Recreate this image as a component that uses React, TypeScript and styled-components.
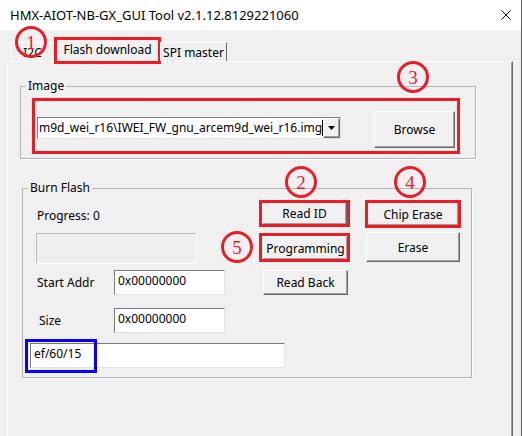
import React from 'react';
import styled, { createGlobalStyle } from 'styled-components';

const RED = '#ed1c24';
const UI_FONT = `"Noto Sans", "Open Sans", "Liberation Sans", sans-serif`;

const GlobalStyle = createGlobalStyle`
  html, body { margin: 0; padding: 0; background: #ffffff; }
  body { font-family: ${UI_FONT}; font-size: 12px; color: #000; }
  * { box-sizing: border-box; }
`;

const Window = styled.div`
  position: relative;
  width: 522px;
  height: 436px;
  border-right: 1px solid #5f5f5f;
  display: flex;
  flex-direction: column;
  overflow: hidden;
  background: #f0f0f0;
`;

const TitleBar = styled.div`
  height: 30px;
  flex: none;
  background: #ffffff;
  display: flex;
  align-items: center;
  justify-content: space-between;
  padding: 0 10px 0 10px;
`;

const Title = styled.span`
  font-size: 13px;
  color: #000;
  white-space: nowrap;
`;

const CloseIcon = styled.svg`
  width: 10px;
  height: 10px;
  display: block;
`;

const Client = styled.div`
  flex: 1;
  display: flex;
  flex-direction: column;
  padding: 8px 0 0 7px;
  width: 514px;
`;

const TabStrip = styled.div`
  position: relative;
  z-index: 1;
  display: flex;
  align-items: flex-end;
  height: 24px;
  padding-left: 3px;
`;

const Tab = styled.div<{ $w: number; $active?: boolean }>`
  position: relative;
  width: ${(p) => p.$w}px;
  height: ${(p) => (p.$active ? 24 : 19)}px;
  margin-bottom: ${(p) => (p.$active ? 0 : 1)}px;
  display: flex;
  align-items: center;
  justify-content: center;
  padding-bottom: ${(p) => (p.$active ? 2 : 0)}px;
  background: #f0f0f0;
  border-top: 1px solid #ffffff;
  border-left: 1px solid #ffffff;
  border-right: 1px solid ${(p) => (p.$active ? '#a0a0a0' : '#696969')};
  white-space: nowrap;
  font-size: 12px;
`;

const Panel = styled.div`
  position: relative;
  z-index: 0;
  flex: 1;
  margin-top: -1px;
  width: 506px;
  border-top: 1px solid #ffffff;
  border-left: 1px solid #ffffff;
  border-right: 1px solid #696969;
  box-shadow: inset -1px 0 0 #a0a0a0;
  padding: 24px 0 0 12px;
  display: flex;
  flex-direction: column;
`;

const GroupBox = styled.div<{ $w: number; $h: number; $mt?: number; $ml?: number }>`
  position: relative;
  flex: none;
  width: ${(p) => p.$w}px;
  height: ${(p) => p.$h}px;
  margin-top: ${(p) => p.$mt ?? 0}px;
  margin-left: ${(p) => p.$ml ?? 0}px;
  border: 1px solid #b4b4b4;
  box-shadow: 1px 1px 0 #ffffff;
`;

const Legend = styled.span`
  position: absolute;
  top: -9px;
  left: 5px;
  padding: 0 2px;
  line-height: 16px;
  background: #f0f0f0;
  font-size: 12px;
  white-space: nowrap;
`;

const ImageRow = styled.div`
  display: flex;
  align-items: flex-start;
  margin: 11px 0 0 11px;
  width: 428px;
  height: 56px;
  border: 3px solid ${RED};
`;

const Combo = styled.div`
  display: flex;
  margin: 16px 0 0 2px;
  width: 304px;
  height: 22px;
  background: #ffffff;
  border-style: solid;
  border-width: 1px;
  border-color: #828282 #e3e3e3 #e3e3e3 #828282;
`;

const ComboText = styled.div`
  flex: 1;
  overflow: hidden;
  white-space: nowrap;
  padding: 1px 0 0 1px;
  line-height: 18px;
  font-size: 12px;
  position: relative;
`;

const Caret = styled.span`
  position: absolute;
  right: 0;
  top: 2px;
  width: 1px;
  height: 16px;
  background: #000;
`;

const DropButton = styled.div`
  flex: none;
  width: 17px;
  height: 20px;
  display: flex;
  align-items: center;
  justify-content: center;
  background: #f0f0f0;
  border-style: solid;
  border-width: 1px;
  border-color: #ffffff #696969 #696969 #ffffff;
  box-shadow: inset -1px -1px 0 #a0a0a0;
`;

const Button = styled.div<{ $w: number; $h: number; $mt?: number; $ml?: number }>`
  flex: none;
  width: ${(p) => p.$w}px;
  height: ${(p) => p.$h}px;
  margin-top: ${(p) => p.$mt ?? 0}px;
  margin-left: ${(p) => p.$ml ?? 0}px;
  display: flex;
  align-items: center;
  justify-content: center;
  background: #f0f0f0;
  border-style: solid;
  border-width: 1px;
  border-color: #ffffff #696969 #696969 #ffffff;
  box-shadow: inset -1px -1px 0 #a0a0a0;
  font-size: 12px;
  white-space: nowrap;
`;

const BurnBody = styled.div`
  display: flex;
  flex-direction: column;
  padding: 11px 0 0 7px;
`;

const BurnRow = styled.div<{ $h: number; $mt?: number }>`
  display: grid;
  grid-template-columns: 232px 104px 1fr;
  align-items: start;
  height: ${(p) => p.$h}px;
  margin-top: ${(p) => p.$mt ?? 0}px;
`;

const Cell = styled.div<{ $mt?: number; $ml?: number; $span?: boolean }>`
  display: flex;
  align-items: center;
  margin-top: ${(p) => p.$mt ?? 0}px;
  margin-left: ${(p) => p.$ml ?? 0}px;
  grid-column: ${(p) => (p.$span ? '1 / -1' : 'auto')};
`;

const FieldLabel = styled.span<{ $pl: number; $w: number }>`
  display: block;
  flex: none;
  width: ${(p) => p.$w}px;
  padding-left: ${(p) => p.$pl}px;
  font-size: 12px;
  white-space: nowrap;
`;

const ProgressText = styled.span`
  padding: 2px 0 0 7px;
  line-height: 28px;
  font-size: 12px;
`;

const ProgressBox = styled.div`
  margin: 1px 0 0 6px;
  width: 161px;
  height: 31px;
  background: #efefef;
  border-style: solid;
  border-width: 1px;
  border-color: #bcbcbc #ffffff #ffffff #bcbcbc;
`;

const Edit = styled.div<{ $w: number }>`
  position: relative;
  flex: none;
  width: ${(p) => p.$w}px;
  height: 25px;
  background: #ffffff;
  border-style: solid;
  border-width: 1px;
  border-color: #7a7a7a #e3e3e3 #e3e3e3 #7a7a7a;
  padding: 0 0 0 3px;
  line-height: 20px;
  font-size: 12px;
  white-space: nowrap;
`;

const Annotated = styled.div`
  position: relative;
  display: inline-flex;
`;

const Mark = styled.div<{ $t: number; $r: number; $b: number; $l: number }>`
  position: absolute;
  top: ${(p) => -p.$t}px;
  right: ${(p) => -p.$r}px;
  bottom: ${(p) => -p.$b}px;
  left: ${(p) => -p.$l}px;
  border: 3px solid ${RED};
  pointer-events: none;
`;

const BlueMark = styled.div`
  position: absolute;
  left: -6px;
  top: -5px;
  width: 72px;
  height: 34px;
  border: 3px solid #0a00ff;
  pointer-events: none;
`;

const Callout = styled.div<{ $x: number; $y: number }>`
  position: absolute;
  left: ${(p) => p.$x - 16}px;
  top: ${(p) => p.$y - 16}px;
  width: 32px;
  height: 32px;
  border: 3px solid ${RED};
  border-radius: 50%;
  display: flex;
  align-items: center;
  justify-content: center;
  color: ${RED};
  font-family: "Liberation Serif", "DejaVu Serif", serif;
  font-size: 19px;
  line-height: 1;
  z-index: 5;
`;

export default function App() {
  return (
    <>
      <GlobalStyle />
      <Window>
        <TitleBar>
          <Title>HMX-AIOT-NB-GX_GUI Tool v2.1.12.8129221060</Title>
          <CloseIcon viewBox="0 0 10 10">
            <path d="M0.5 0.5 L9.5 9.5 M9.5 0.5 L0.5 9.5" stroke="#000" strokeWidth="1" fill="none" />
          </CloseIcon>
        </TitleBar>
        <Client>
          <TabStrip>
            <Tab $w={45}>I2C</Tab>
            <Tab $w={105} $active>
              Flash download
              <Mark $t={2} $r={2} $b={2} $l={2} />
            </Tab>
            <Tab $w={67}>SPI master</Tab>
          </TabStrip>
          <Panel>
            <GroupBox $w={456} $h={73}>
              <Legend>Image</Legend>
              <ImageRow>
                <Combo>
                  <ComboText>
                    m9d_wei_r16\IWEI_FW_gnu_arcem9d_wei_r16.img
                    <Caret />
                  </ComboText>
                  <DropButton>
                    <svg width="7" height="4" viewBox="0 0 7 4">
                      <path d="M0 0 H7 L3.5 4 Z" fill="#000" />
                    </svg>
                  </DropButton>
                </Combo>
                <Button $w={81} $h={37} $mt={10} $ml={33}>Browse</Button>
              </ImageRow>
            </GroupBox>

            <GroupBox $w={450} $h={190} $mt={29} $ml={2}>
              <Legend>Burn Flash</Legend>
              <BurnBody>
                <BurnRow $h={28}>
                  <Cell>
                    <ProgressText>Progress: 0</ProgressText>
                  </Cell>
                  <Cell $mt={2}>
                    <Annotated>
                      <Button $w={85} $h={23}>Read ID</Button>
                      <Mark $t={2} $r={3} $b={2} $l={3} />
                    </Annotated>
                  </Cell>
                  <Cell $mt={2} $ml={1}>
                    <Annotated>
                      <Button $w={92} $h={24}>Chip Erase</Button>
                      <Mark $t={2} $r={2} $b={2} $l={2} />
                    </Annotated>
                  </Cell>
                </BurnRow>

                <BurnRow $h={32} $mt={4}>
                  <Cell>
                    <ProgressBox />
                  </Cell>
                  <Cell $mt={4} $ml={1}>
                    <Annotated>
                      <Button $w={85} $h={24}>Programming</Button>
                      <Mark $t={3} $r={2} $b={2} $l={4} />
                    </Annotated>
                  </Cell>
                  <Cell>
                    <Button $w={94} $h={30}>Erase</Button>
                  </Cell>
                </BurnRow>

                <BurnRow $h={25} $mt={6}>
                  <Cell>
                    <FieldLabel $pl={7} $w={84}>Start Addr</FieldLabel>
                    <Edit $w={111}>0x00000000</Edit>
                  </Cell>
                  <Cell $ml={1}>
                    <Button $w={85} $h={25}>Read Back</Button>
                  </Cell>
                </BurnRow>

                <BurnRow $h={25} $mt={13}>
                  <Cell>
                    <FieldLabel $pl={9} $w={84}>Size</FieldLabel>
                    <Edit $w={111}>0x00000000</Edit>
                  </Cell>
                </BurnRow>

                <BurnRow $h={25} $mt={10}>
                  <Cell $span>
                    <Edit $w={255}>
                      ef/60/15
                      <BlueMark />
                    </Edit>
                  </Cell>
                </BurnRow>
              </BurnBody>
            </GroupBox>
          </Panel>
        </Client>

        <Callout $x={31} $y={42}>1</Callout>
        <Callout $x={413} $y={77}>3</Callout>
        <Callout $x={301} $y={182}>2</Callout>
        <Callout $x={410} $y={182}>4</Callout>
        <Callout $x={237} $y={247}>5</Callout>
      </Window>
    </>
  );
}
